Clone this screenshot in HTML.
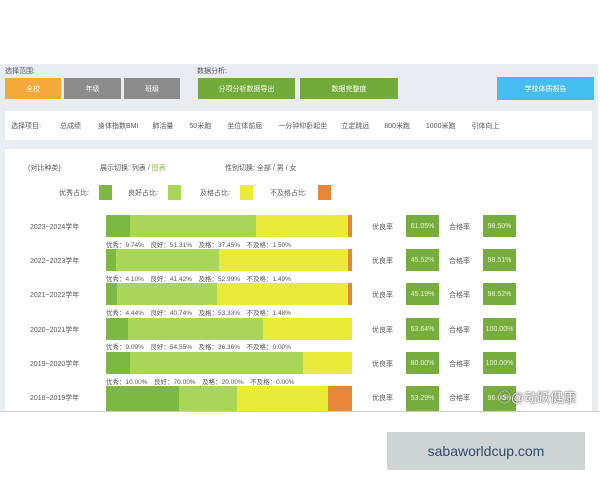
<!DOCTYPE html>
<html><head><meta charset="utf-8"><style>
*{margin:0;padding:0;box-sizing:border-box}
body{width:600px;height:480px;background:#fff;position:relative;overflow:hidden;font-family:"Liberation Sans","Noto Sans CJK SC",sans-serif;font-size:7px;color:#555}
.a{position:absolute}
.bg{left:0;top:64;width:598px}
.btn{position:absolute;color:#fff;font-size:7px;display:flex;align-items:center;justify-content:center}
.bar{position:absolute;left:106px;width:246px;height:22px;display:flex}
.bar div{height:100%}
.e{background:#7db843}.g{background:#a9d558}.p{background:#eaea3a}.f{background:#e8863a}
.lab{position:absolute;left:30px;font-size:7px;color:#555}
.sub{position:absolute;left:106px;font-size:6.5px;color:#555;white-space:nowrap}
.rl{position:absolute;font-size:7px;color:#555}
.box{position:absolute;width:33px;height:22px;background:#76ad3d;color:#e8f5d8;font-size:7px;display:flex;align-items:center;justify-content:center}
</style></head><body>
<div class="a" style="left:0;top:64px;width:598px;height:348px;background:#e9ecf1"></div>
<div class="a" style="left:5px;top:66px;font-size:7px">选择范围:</div>
<div class="a" style="left:197px;top:66px;font-size:7px">数据分析:</div>
<div class="btn" style="left:5px;top:78px;width:56px;height:21px;background:#f6a93b">全校</div>
<div class="btn" style="left:64px;top:78px;width:57px;height:21px;background:#8c8c8c">年级</div>
<div class="btn" style="left:124px;top:78px;width:56px;height:21px;background:#8c8c8c">班级</div>
<div class="btn" style="left:198px;top:78px;width:97px;height:21px;background:#72ab3a">分项分析数据导出</div>
<div class="btn" style="left:300px;top:78px;width:98px;height:21px;background:#72ab3a">数据完整度</div>
<div class="btn" style="left:497px;top:77px;width:97px;height:23px;background:#45bdf0">学校体质报告</div>
<div class="a" style="left:5px;top:111px;width:587px;height:29px;background:#fff;display:flex;align-items:center;font-size:7px;color:#555">
<span style="margin-left:6px">选择项目:</span><span style="margin-left:19px">总成绩</span><span style="margin-left:17px">身体指数BMI</span><span style="margin-left:14px">肺活量</span><span style="margin-left:16px">50米跑</span><span style="margin-left:16px">坐位体前屈</span><span style="margin-left:16px">一分钟仰卧起坐</span><span style="margin-left:14px">立定跳远</span><span style="margin-left:15px">800米跑</span><span style="margin-left:16px">1000米跑</span><span style="margin-left:16px">引体向上</span></div>
<div class="a" style="left:5px;top:149px;width:587px;height:263px;background:#fff"></div>
<div class="a" style="left:28px;top:163px">(对比种类)</div>
<div class="a" style="left:100px;top:163px">展示切换: 列表 / <span style="color:#8cbf4a">图表</span></div>
<div class="a" style="left:225px;top:163px">性别切换: 全部 / 男 / 女</div>
<div class="a" style="left:59px;top:188px">优秀占比:</div><div class="a e" style="left:99px;top:185px;width:13px;height:15px"></div>
<div class="a" style="left:128px;top:188px">良好占比:</div><div class="a g" style="left:168px;top:185px;width:13px;height:15px"></div>
<div class="a" style="left:200px;top:188px">及格占比:</div><div class="a p" style="left:240px;top:185px;width:13px;height:15px"></div>
<div class="a" style="left:270px;top:188px">不及格占比:</div><div class="a f" style="left:318px;top:185px;width:13px;height:15px"></div>

<div class="lab" style="top:222px">2023~2024学年</div>
<div class="bar" style="top:215px"><div class="e" style="width:24px"></div><div class="g" style="width:126px"></div><div class="p" style="width:92px"></div><div class="f" style="width:4px"></div></div>
<div class="sub" style="top:239px">优秀：9.74%　良好：51.31%　及格：37.45%　不及格：1.50%</div>
<div class="rl" style="left:372px;top:222px">优良率</div><div class="box" style="left:406px;top:215px">61.05%</div>
<div class="rl" style="left:449px;top:222px">合格率</div><div class="box" style="left:483px;top:215px">98.50%</div>

<div class="lab" style="top:256px">2022~2023学年</div>
<div class="bar" style="top:249px"><div class="e" style="width:10px"></div><div class="g" style="width:103px"></div><div class="p" style="width:129px"></div><div class="f" style="width:4px"></div></div>
<div class="sub" style="top:273px">优秀：4.10%　良好：41.42%　及格：52.99%　不及格：1.49%</div>
<div class="rl" style="left:372px;top:256px">优良率</div><div class="box" style="left:406px;top:249px">45.52%</div>
<div class="rl" style="left:449px;top:256px">合格率</div><div class="box" style="left:483px;top:249px">98.51%</div>

<div class="lab" style="top:290px">2021~2022学年</div>
<div class="bar" style="top:283px"><div class="e" style="width:11px"></div><div class="g" style="width:100px"></div><div class="p" style="width:131px"></div><div class="f" style="width:4px"></div></div>
<div class="sub" style="top:307px">优秀：4.44%　良好：40.74%　及格：53.33%　不及格：1.48%</div>
<div class="rl" style="left:372px;top:290px">优良率</div><div class="box" style="left:406px;top:283px">45.19%</div>
<div class="rl" style="left:449px;top:290px">合格率</div><div class="box" style="left:483px;top:283px">98.52%</div>

<div class="lab" style="top:325px">2020~2021学年</div>
<div class="bar" style="top:318px"><div class="e" style="width:22px"></div><div class="g" style="width:135px"></div><div class="p" style="width:89px"></div></div>
<div class="sub" style="top:341px">优秀：9.09%　良好：54.55%　及格：36.36%　不及格：0.00%</div>
<div class="rl" style="left:372px;top:325px">优良率</div><div class="box" style="left:406px;top:318px">63.64%</div>
<div class="rl" style="left:449px;top:325px">合格率</div><div class="box" style="left:483px;top:318px">100.00%</div>

<div class="lab" style="top:359px">2019~2020学年</div>
<div class="bar" style="top:352px"><div class="e" style="width:24px"></div><div class="g" style="width:173px"></div><div class="p" style="width:49px"></div></div>
<div class="sub" style="top:376px">优秀：10.00%　良好：70.00%　及格：20.00%　不及格：0.00%</div>
<div class="rl" style="left:372px;top:359px">优良率</div><div class="box" style="left:406px;top:352px">80.00%</div>
<div class="rl" style="left:449px;top:359px">合格率</div><div class="box" style="left:483px;top:352px">100.00%</div>

<div class="lab" style="top:393px">2018~2019学年</div>
<div class="bar" style="top:386px;height:25px"><div class="e" style="width:73px"></div><div class="g" style="width:58px"></div><div class="p" style="width:91px"></div><div class="f" style="width:24px"></div></div>
<div class="rl" style="left:372px;top:393px">优良率</div><div class="box" style="left:406px;top:386px;height:25px">53.29%</div>
<div class="rl" style="left:449px;top:393px">合格率</div><div class="box" style="left:483px;top:386px;height:25px">96.00%</div>
<div class="a" style="left:498px;top:387px;font-size:13px;color:#fff;text-shadow:0 0 2px #666,0 0 1px #333">ⓢ@动跃健康</div>
<div class="a" style="left:0;top:411px;width:600px;height:1px;background:#ccc"></div>
<div class="a" style="left:387px;top:432px;width:198px;height:38px;background:#cfd5d5;display:flex;align-items:center;justify-content:center;font-size:14px;color:#2c4a6a">sabaworldcup.com</div>
</body></html>
